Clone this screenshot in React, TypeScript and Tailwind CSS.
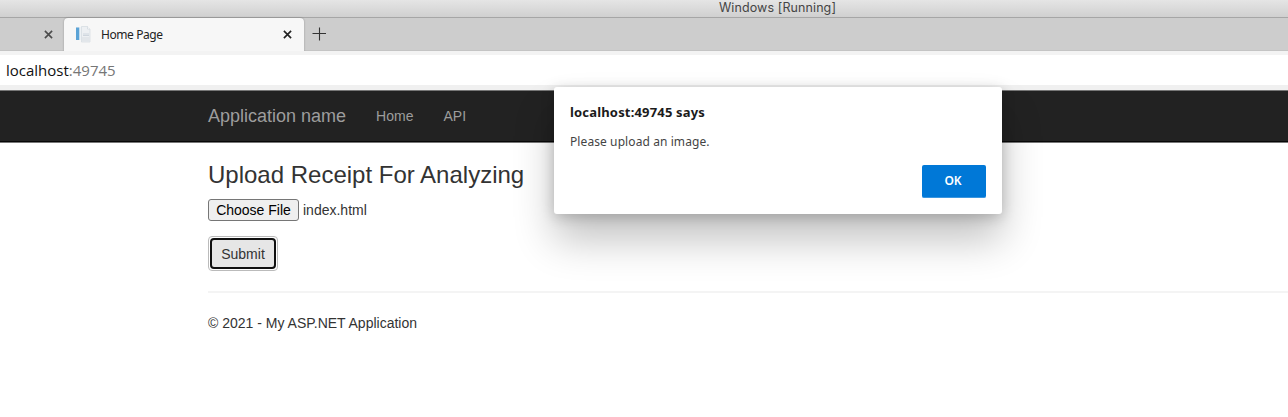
import React from 'react';

function CloseIcon({ className }: { className: string }) {
  return (
    <svg viewBox="0 0 10 10" className={className} fill="none" stroke="currentColor" strokeWidth="1.8">
      <path d="M1 1 9 9M9 1 1 9" />
    </svg>
  );
}

function PageIcon() {
  return (
    <svg viewBox="0 0 16 17" className="ml-[11px] h-[17px] w-4 shrink-0">
      <path d="M1 1h10v13H1z" fill="#eef2f5" />
      <path d="M1 1.500h3V14H1z" fill="#5ba3d6" />
      <path d="M4 1.500h1V14H4z" fill="#c5dced" />
      <path d="M6.500.5h6l2.500 2.500v13h-8.500z" fill="#edf0f3" stroke="#d3dae0" strokeWidth=".7" />
      <path d="M12.500.5v2.500H15" fill="#fff" stroke="#cfd6dc" strokeWidth=".7" />
      <path d="M8 8h6M8 9.500h6" stroke="#c6cfd8" strokeWidth=".8" />
      <path d="M7 11h8v4.500H7z" fill="#e2e6ea" />
    </svg>
  );
}

function BrowserChrome() {
  return (
    <>
      <div className="flex h-[18px] justify-center border-b border-[#a6a6a6] bg-gradient-to-b from-[#e5e5e5] to-[#d0d0d0] pl-[267px]">
        <span className="[font-family:Inter,sans-serif] text-[12.5px] leading-[15px] tracking-[0.1px] whitespace-nowrap text-[#454545]">
          Windows [Running]
        </span>
      </div>
      <div className="flex h-[33px] border-b border-[#c4c4c4] bg-[#cdcdcd]">
        <div className="flex w-16 items-center pt-px pl-11">
          <CloseIcon className="h-[9px] w-[9px] text-[#4c4c4c]" />
        </div>
        <div className="relative -mb-px flex w-60 items-center rounded-t-[4px] bg-[#f7f7f7] shadow-[0_0_2px_rgba(0,0,0,0.3)]">
          <PageIcon />
          <span className="ml-[10px] font-['Noto_Sans',sans-serif] text-[12px] leading-4 tracking-[-0.42px] whitespace-nowrap text-[#222]">
            Home Page
          </span>
          <CloseIcon className="mr-3 ml-auto h-[9px] w-[9px] text-[#222]" />
        </div>
        <svg viewBox="0 0 14 14" className="mt-[9px] ml-[8px] h-[14px] w-[14px]" stroke="#333" strokeWidth="1.100">
          <path d="M7.500 .5v13M.5 6.500h13.500" />
        </svg>
      </div>
      <div className="relative h-1 bg-[#f3f3f3]" />
      <div className="flex h-[30px] items-center bg-white pl-[6px]">
        <span className="font-['Open_Sans',sans-serif] text-[15px] leading-5 whitespace-nowrap text-[#111]">
          localhost<span className="text-[#767676]">:49745</span>
        </span>
      </div>
      <div className="h-[5px] bg-[#f0f0f0]" />
    </>
  );
}

function NavBar() {
  return (
    <nav className="flex h-[53px] items-center border-t border-b border-t-[#777] border-b-[#777] bg-[#222] pb-[2px] pl-52 text-[#9d9d9d] shadow-[inset_0_-1px_0_#080808]">
      <span className="text-[18px] leading-5 whitespace-nowrap">Application name</span>
      <span className="ml-[30px] text-[14px] leading-5">Home</span>
      <span className="ml-[30px] text-[14px] leading-5">API</span>
    </nav>
  );
}

function AlertDialog() {
  return (
    <div
      role="alertdialog"
      className="absolute top-[87px] left-[554px] flex h-[127px] w-[448px] flex-col rounded-[3px] bg-white px-4 pt-[15px] font-['Noto_Sans',sans-serif] shadow-[0_26px_40px_rgba(0,0,0,0.24),0_3px_14px_rgba(0,0,0,0.2)]"
    >
      <h2 className="text-[13px] leading-5 font-bold tracking-[0.17px] whitespace-nowrap text-[#1b1b1b]">
        localhost:49745 says
      </h2>
      <p className="mt-[10px] text-[12px] leading-5 tracking-[0.09px] whitespace-nowrap text-[#444]">
        Please upload an image.
      </p>
      <button className="mt-[13px] h-[33px] w-16 self-end rounded-[2px] border-b border-[#3b96df] bg-[#0078d7] pr-[2px] text-[12px] font-semibold text-white">
        OK
      </button>
    </div>
  );
}

export default function App() {
  return (
    <div className="relative h-[417px] w-[1288px] overflow-hidden bg-white font-['Liberation_Sans',sans-serif] text-[14px] text-[#333]">
      <BrowserChrome />
      <NavBar />
      <main className="flex flex-col items-start pl-52">
        <h1 className="mt-[19px] text-[24px] leading-[26px] whitespace-nowrap">Upload Receipt For Analyzing</h1>
        <div className="mt-[11px] flex items-center">
          <button className="h-[22px] w-[91px] rounded-[3px] border border-[#767676] bg-[#efefef] text-[14px] leading-5 whitespace-nowrap text-black">
            Choose File
          </button>
          <span className="ml-1 leading-5">index.html</span>
        </div>
        <button className="mt-[15px] flex h-[35px] w-[70px] rounded-[4px] border border-[#bbb] bg-white p-px">
          <span className="flex h-full w-full items-center justify-center rounded-[4px] border-2 border-[#101010] bg-[#e6e6e6] pt-[2px] text-[14px]">
            Submit
          </span>
        </button>
        <hr className="mt-5 w-full border-t-2 border-[#f4f4f4]" />
        <footer className="mt-5 leading-5 whitespace-nowrap">© 2021 - My ASP.NET Application</footer>
      </main>
      <AlertDialog />
    </div>
  );
}
